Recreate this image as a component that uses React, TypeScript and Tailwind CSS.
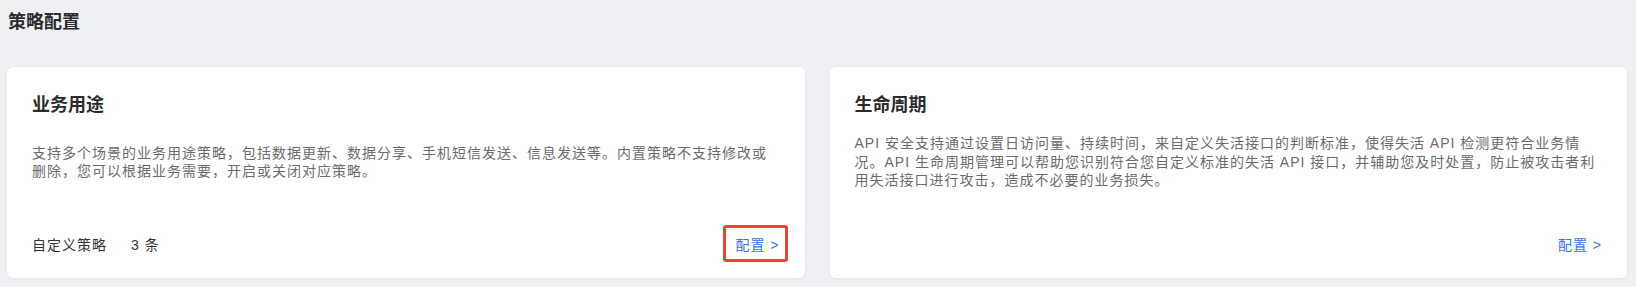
import React from "react";

interface StrategyCard {
  id: string;
  title: string;
  desc: string;
  count?: number;
  highlight?: boolean;
}

const CARDS: StrategyCard[] = [
  {
    id: "usage",
    title: "业务用途",
    desc: "支持多个场景的业务用途策略，包括数据更新、数据分享、手机短信发送、信息发送等。内置策略不支持修改或删除，您可以根据业务需要，开启或关闭对应策略。",
    count: 3,
    highlight: true,
  },
  {
    id: "lifecycle",
    title: "生命周期",
    desc: "API 安全支持通过设置日访问量、持续时间，来自定义失活接口的判断标准，使得失活 API 检测更符合业务情况。API 生命周期管理可以帮助您识别符合您自定义标准的失活 API 接口，并辅助您及时处置，防止被攻击者利用失活接口进行攻击，造成不必要的业务损失。",
  },
];

function Card({ card }: { card: StrategyCard }) {
  return (
    <div className="flex h-[211px] flex-col rounded-[6px] bg-white px-[25px] pt-[25px] pb-[23px] shadow-[0_1px_4px_rgba(0,0,0,0.05)]">
      <h3 className="text-[18px] leading-[26px] font-bold text-[#2b2b2b]">{card.title}</h3>

      {/* description box keeps the same centre line in both cards */}
      <div className="mt-[7px] flex h-[74px] items-center">
        <p className="text-[14px] leading-[18.5px] tracking-[1px] text-[#6b6b6b]">{card.desc}</p>
      </div>

      <div className="mt-auto flex items-center justify-between text-[14px] leading-[20px] tracking-[1px]">
        {card.count !== undefined ? (
          <div className="flex items-center gap-[24px] text-[#333]">
            <span>自定义策略</span>
            <span>{card.count} 条</span>
          </div>
        ) : (
          <span />
        )}
        <a className="relative cursor-pointer text-[#3b6ff5]">
          配置 &gt;
          {card.highlight && (
            <span className="pointer-events-none absolute -top-[10px] -right-[8px] -bottom-[7px] -left-[12px] rounded-[3px] border-[3px] border-[#ef4136]" />
          )}
        </a>
      </div>
    </div>
  );
}

export default function App() {
  return (
    <div className="min-h-[287px] bg-[#eef0f4] pt-[10px] pr-[9px] pb-[9px] pl-[7px] font-['Liberation_Sans','Noto_Sans_CJK_SC',sans-serif]">
      <h2 className="pl-[1px] text-[18px] leading-[24px] font-bold text-[#2b2b2b]">策略配置</h2>

      <div className="mt-[33px] grid grid-cols-2 gap-[25px]">
        {CARDS.map((card) => (
          <Card key={card.id} card={card} />
        ))}
      </div>
    </div>
  );
}
